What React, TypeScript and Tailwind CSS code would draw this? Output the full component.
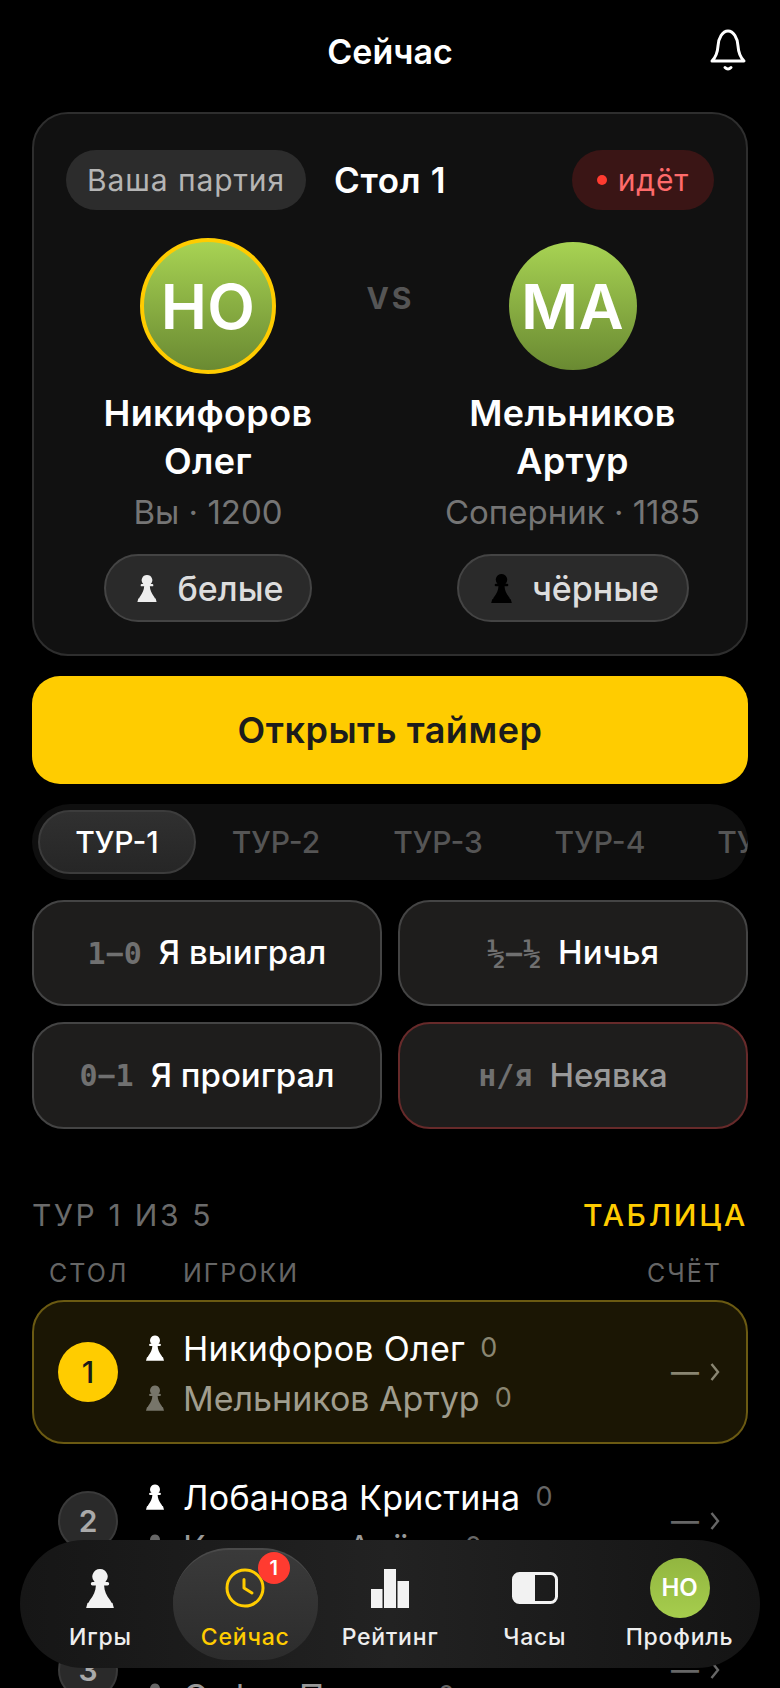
import React from "react";

const PAWN =
  "M14 0a7.6 7.6 0 0 1 5.4 13h2.1a1.5 1.5 0 0 1 0 3.4h-3.4c.2 5.6 2.5 10 5.9 14.6.6.8 1 1.400 1.300 2.500l1.200.5 1.500 5.500h-28l1.500-5.500 1.200-.5c.3-1.100.7-1.700 1.300-2.500 3.400-4.600 5.700-9 5.900-14.600h-3.400a1.500 1.500 0 0 1 0-3.400h2.100a7.600 7.600 0 0 1 5.400-13z";

function Pawn({ className }: { className: string }) {
  return (
    <svg viewBox="0 0 28 39" className={className} fill="currentColor" aria-hidden="true">
      <path d={PAWN} />
    </svg>
  );
}

function Player({ ring, initials, first, last, sub, pawn, side, chipClass }: { ring: boolean; initials: string; first: string; last: string; sub: string; pawn: string; side: string; chipClass: string }) {
  return (
    <div className="flex flex-col items-center">
      <div className="h-[136px] flex items-center justify-center">
        <div className={`rounded-full bg-gradient-to-b from-[#a8d353] to-[#6a8a32] flex items-center justify-center text-white font-semibold text-[62px] tracking-[0.3px] ${ring ? "w-[136px] h-[136px] border-4 border-[#ffcc00]" : "w-[128px] h-[128px]"}`}>
          {initials}
        </div>
      </div>
      <div className="mt-[15px] text-white font-semibold text-[36px] tracking-[0.4px] leading-[48px] text-center whitespace-nowrap">
        <div>{first}</div>
        <div>{last}</div>
      </div>
      <div className="mt-[7px] text-[#757575] text-[33px] leading-[40px] whitespace-nowrap">{sub}</div>
      <div className={`mt-[22px] h-[68px] rounded-full border-2 border-[#444444] bg-[#2a2a2a] flex items-center justify-center gap-[20px] pl-[5px] text-[#dddddd] text-[34px] font-medium ${chipClass}`}>
        <Pawn className={pawn} />
        <span>{side}</span>
      </div>
    </div>
  );
}

function ResultBtn({ code, label, danger }: { code: string; label: string; danger?: boolean }) {
  return (
    <div className={`h-full rounded-[32px] border-2 bg-[#1e1d1c] flex items-center justify-center gap-[17px] ${danger ? "border-[#672a2a]" : "border-[#444444]"}`}>
      <span className="font-['DejaVu_Sans_Mono',monospace] font-bold text-[30px] text-[#707070]">{code}</span>
      <span className={`text-[33px] font-medium ${danger ? "text-[#999999]" : "text-white"}`}>{label}</span>
    </div>
  );
}

function Row({ num, active, a, b }: { num: string; active?: boolean; a: string; b: string }) {
  return (
    <div className={`h-[144px] rounded-[32px] border-2 flex items-center pl-[24px] pr-[26px] ${active ? "bg-[#1b1604] border-[#6b5a12]" : "border-transparent"}`}>
      <div className={`w-[60px] h-[60px] rounded-full flex items-center justify-center text-[30px] shrink-0 ${active ? "bg-[#ffcc00] text-[#1a1a1a] font-medium" : "bg-[#2a2a2a] border-2 border-[#3a3a3a] text-[#aaaaaa] font-semibold"}`}>
        {num}
      </div>
      <div className="ml-[28px] flex-1 flex flex-col gap-[2px] pt-[2px]">
        <div className="flex items-center h-[48px]">
          <Pawn className="w-[18px] h-[26px] text-white" />
          <span className="ml-[19px] text-[34px] tracking-[0.3px] text-white">{a}</span>
          <span className={`ml-[15px] text-[27px] ${active ? "text-[#8a8672]" : "text-[#666666]"}`}>0</span>
        </div>
        <div className="flex items-center h-[48px]">
          <Pawn className={`w-[18px] h-[26px] ${active ? "text-[#77756a]" : "text-[#666666]"}`} />
          <span className={`ml-[19px] text-[34px] ${active ? "text-[#a09d8e]" : "text-[#999999]"}`}>{b}</span>
          <span className={`ml-[15px] text-[27px] ${active ? "text-[#8a8672]" : "text-[#666666]"}`}>0</span>
        </div>
      </div>
      <div className={`flex items-center gap-[11px] ${active ? "text-[#8a8672]" : "text-[#666666]"}`}>
        <div className="text-[28px] leading-none font-medium">—</div>
        <svg viewBox="0 0 10 20" className="w-[10px] h-[20px]" fill="none" stroke="currentColor" strokeWidth="2.4" aria-hidden="true">
          <path d="M1.500 2l6.500 8-6.500 8" />
        </svg>
      </div>
    </div>
  );
}

function NavItem({ icon, label, active, badge }: { icon: React.ReactNode; label: string; active?: boolean; badge?: string }) {
  return (
    <div className={`relative h-[112px] rounded-[56px] flex flex-col items-center ${active ? "bg-gradient-to-b from-[#3a3a3a] to-[#2c2c2c] border-t-2 border-[#4a4a4a]" : ""}`}>
      <div className={`h-[64px] w-full flex items-center justify-center ${active ? "mt-[6px]" : "mt-[8px]"}`}>{icon}</div>
      <div className={`mt-[3px] text-[23px] font-medium leading-[28px] tracking-[0.8px] whitespace-nowrap ${active ? "text-[#ffcc00]" : "text-[#eeeeee]"}`}>{label}</div>
      {badge && (
        <div className="absolute left-[85px] top-[2px] w-[32px] h-[32px] rounded-full bg-[#ff3b30] text-white text-[20px] font-semibold flex items-center justify-center">
          {badge}
        </div>
      )}
    </div>
  );
}

export default function App() {
  return (
    <div className="relative h-[1688px] w-[780px] overflow-hidden bg-black font-['Inter',sans-serif]">
      <div className="relative h-[112px] flex items-center justify-center pb-[10px]">
        <div className="text-white text-[34px] font-semibold">Сейчас</div>
        <svg viewBox="0 0 40 44" className="absolute left-[708px] top-[28px] w-[40px] h-[44px]" fill="none" stroke="white" strokeWidth="3" strokeLinejoin="round" strokeLinecap="round" aria-hidden="true">
          <path d="M4 33c4-4 5.500-7.500 6-15 .4-8 4.500-15 10-15s9.600 7 10 15c.5 7.500 2 11 6 15z" />
          <path d="M17 39.500q3 3 6 0" />
        </svg>
      </div>

      <div className="px-[32px]">
        <div className="h-[544px] rounded-[36px] border-2 border-[#2e2e2e] bg-[#111111] pt-[36px] px-[32px]">
          <div className="h-[60px] flex items-center">
            <div className="h-[60px] px-[21px] rounded-full bg-[#2c2c2c] text-[#b5b5b5] text-[30px] tracking-[0.9px] flex items-center whitespace-nowrap">Ваша партия</div>
            <div className="ml-[28px] text-white text-[35px] tracking-[0.7px] font-semibold whitespace-nowrap">Стол 1</div>
            <div className="ml-auto h-[60px] px-[25px] rounded-full bg-[#3a1515] text-[#ff6b6b] text-[30px] tracking-[0.8px] flex items-center gap-[11px]">
              <span className="w-[10px] h-[10px] rounded-full bg-[#ff3b30]" />
              <span>идёт</span>
            </div>
          </div>
          <div className="mt-[28px] grid grid-cols-[284px_1fr_283px]">
            <Player ring initials="НО" first="Никифоров" last="Олег" sub="Вы · 1200" pawn="w-[20px] h-[27px] text-[#eeeeee]" side="белые" chipClass="w-[208px]" />
            <div className="h-[120px] flex items-center justify-center text-[#555555] text-[30px] font-bold tracking-[3px]">VS</div>
            <Player ring={false} initials="МА" first="Мельников" last="Артур" sub="Соперник · 1185" pawn="w-[21px] h-[29px] text-black" side="чёрные" chipClass="w-[232px]" />
          </div>
        </div>

        <div className="mt-[20px] h-[108px] rounded-[28px] bg-[#ffcc00] flex items-center justify-center text-[#1c1c1c] text-[36px] tracking-[0.5px] font-semibold">
          Открыть таймер
        </div>

        <div className="mt-[20px] h-[76px] rounded-full bg-[#0f0f0f] flex items-center gap-[4px] pl-[6px] overflow-hidden">
          <div className="h-[64px] w-[158px] shrink-0 rounded-[32px] flex items-center justify-center text-[30px] font-medium bg-gradient-to-b from-[#303030] to-[#262626] border-2 border-[#3c3c3c] text-white">ТУР-1</div>
          <div className="h-[64px] w-[158px] -ml-[3px] shrink-0 flex items-center justify-center text-[30px] font-medium text-[#555555]">ТУР-2</div>
          <div className="h-[64px] w-[158px] shrink-0 flex items-center justify-center text-[30px] font-medium text-[#555555]">ТУР-3</div>
          <div className="h-[64px] w-[158px] shrink-0 flex items-center justify-center text-[30px] font-medium text-[#555555]">ТУР-4</div>
          <div className="h-[64px] w-[158px] shrink-0 flex items-center justify-center text-[30px] font-medium text-[#555555]">ТУР-5</div>
        </div>

        <div className="mt-[20px] grid grid-cols-2 grid-rows-[106px_107px] gap-[16px]">
          <ResultBtn code="1−0" label="Я выиграл" />
          <ResultBtn code="½−½" label="Ничья" />
          <ResultBtn code="0−1" label="Я проиграл" />
          <ResultBtn code="н/я" label="Неявка" danger />
        </div>

        <div className="mt-[66px] flex items-center justify-between text-[30px] tracking-[2.7px] leading-[40px]">
          <span className="text-[#6b6b6b]">ТУР 1 ИЗ 5</span>
          <span className="text-[#ffcc00] font-medium">ТАБЛИЦА</span>
        </div>
        <div className="mt-[21px] h-[36px] flex items-center text-[#666666] text-[25px] tracking-[2px]">
          <span className="ml-[17px] w-[134px]">СТОЛ</span>
          <span>ИГРОКИ</span>
          <span className="ml-auto mr-[26px]">СЧЁТ</span>
        </div>
        <div className="mt-[8px] flex flex-col gap-[5px]">
          <Row num="1" active a="Никифоров Олег" b="Мельников Артур" />
          <Row num="2" a="Лобанова Кристина" b="Круглова Алёна" />
          <Row num="3" a="Орлов Денис" b="Софья Панина" />
        </div>
      </div>

      <div className="absolute left-[20px] top-[1540px] w-[740px] h-[128px] rounded-[64px] bg-gradient-to-r from-[#161616] via-[#222222] to-[#141414] p-[8px] grid grid-cols-5">
        <NavItem label="Игры" icon={<Pawn className="w-[28px] h-[39px] text-[#f2f2f2]" />} />
        <NavItem
          active
          label="Сейчас"
          badge="1"
          icon={
            <svg viewBox="0 0 40 40" className="w-[40px] h-[40px]" fill="none" stroke="#ffcc00" strokeWidth="3" strokeLinecap="round" strokeLinejoin="round" aria-hidden="true">
              <circle cx="20" cy="20" r="18" />
              <path d="M19 11.500v8.500l8 5" />
            </svg>
          }
        />
        <NavItem
          label="Рейтинг"
          icon={
            <svg viewBox="0 0 38 39" className="w-[38px] h-[39px]" fill="#f2f2f2" aria-hidden="true">
              <rect x="0" y="20" width="11.500" height="19" />
              <rect x="13" y="0" width="12" height="39" />
              <rect x="26.500" y="12" width="11.500" height="27" />
            </svg>
          }
        />
        <NavItem
          label="Часы"
          icon={
            <svg viewBox="0 0 46 32" className="w-[46px] h-[32px]" aria-hidden="true">
              <rect x="1.500" y="1.500" width="43" height="29" rx="6" fill="none" stroke="#f2f2f2" strokeWidth="3" />
              <path d="M7 1.500h16v29h-16a5.500 5.500 0 0 1-5.500-5.500v-18a5.500 5.500 0 0 1 5.500-5.500z" fill="#f2f2f2" />
            </svg>
          }
        />
        <NavItem
          label="Профиль"
          icon={
            <div className="w-[60px] h-[60px] rounded-full bg-gradient-to-b from-[#92b640] to-[#a6cd4d] flex items-center justify-center text-white text-[24px] font-semibold">
              НО
            </div>
          }
        />
      </div>
    </div>
  );
}
